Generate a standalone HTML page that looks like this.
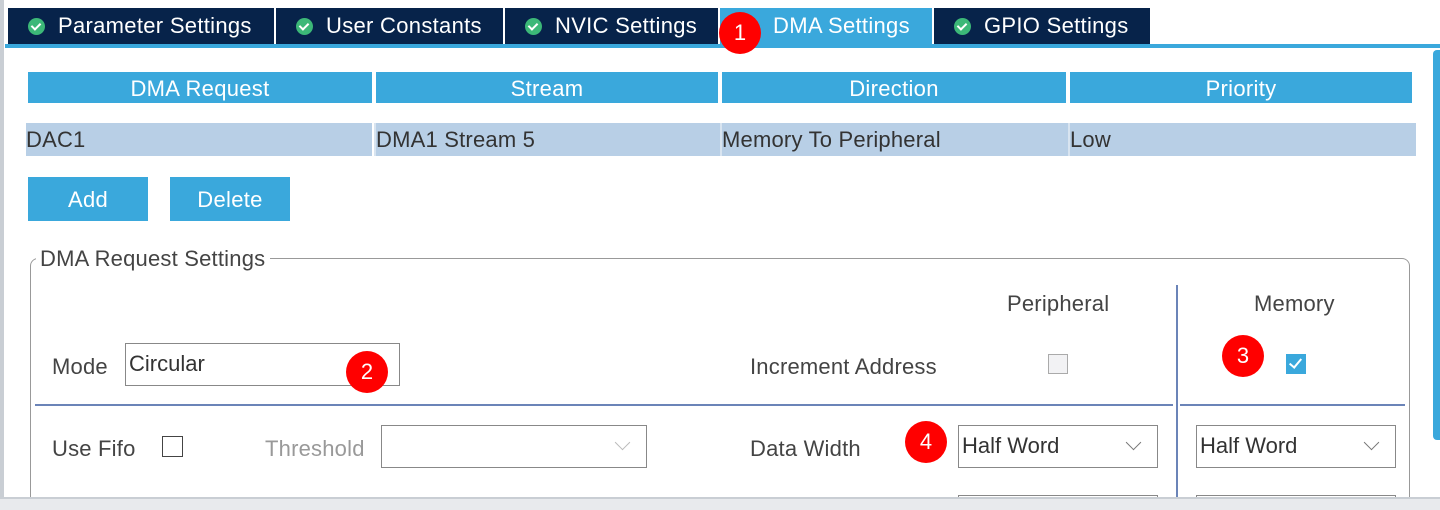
<!DOCTYPE html>
<html style="overflow:hidden;height:510px"><head><meta charset="utf-8"><style>
body{margin:0;width:1440px;height:510px;background:#fff;position:relative;overflow:hidden;font-family:"Liberation Sans",sans-serif;}
.a{position:absolute;}
.tab{position:absolute;top:8px;height:36px;background:#07234a;color:#fff;font-size:22px;letter-spacing:0.3px;line-height:36px;box-sizing:border-box;padding-left:20px;white-space:nowrap;}
.chk{display:inline-block;width:17px;height:17px;border-radius:50%;background:#3cb878;vertical-align:-2px;margin-right:13px;position:relative;}
.chk:after{content:"";position:absolute;left:5px;top:3px;width:4px;height:7px;border:solid #fff;border-width:0 2px 2px 0;transform:rotate(45deg);}
.hd{position:absolute;top:72px;height:31px;background:#3aa8dc;color:#fff;font-size:22px;letter-spacing:0.3px;line-height:33px;text-align:center;}
.rw{position:absolute;top:123px;height:33px;background:#b8cfe6;color:#333;font-size:22px;letter-spacing:0.2px;line-height:33px;}
.btn{position:absolute;top:177px;height:44px;width:120px;background:#3aa8dc;color:#fff;font-size:22px;letter-spacing:0.3px;line-height:46px;text-align:center;}
.lbl{position:absolute;font-size:22px;letter-spacing:0.2px;color:#444;white-space:nowrap;}
.sel{position:absolute;height:43px;border:1.5px solid #888;box-sizing:border-box;background:#fff;font-size:22px;line-height:40px;padding-left:3px;color:#333;}
.arr{position:absolute;right:18px;top:11px;width:10px;height:10px;border:solid #777;border-width:0 1.5px 1.5px 0;transform:rotate(45deg);}
.red{position:absolute;width:42px;height:42px;border-radius:50%;background:#f00;color:#fff;font-size:22px;line-height:42px;text-align:center;}
</style></head><body>
<div class="a" style="left:0;top:0;width:4px;height:510px;background:#c9ced4"></div>
<div class="a" style="left:5px;top:44px;width:1435px;height:4px;background:#3aa8dc"></div>
<div class="tab" style="left:8px;width:266px"><span class="chk"></span>Parameter Settings</div>
<div class="tab" style="left:276px;width:227px"><span class="chk"></span>User Constants</div>
<div class="tab" style="left:505px;width:213px"><span class="chk"></span>NVIC Settings</div>
<div class="tab" style="left:720px;width:212px;background:#3aa8dc;padding-left:53px">DMA Settings</div>
<div class="tab" style="left:934px;width:216px"><span class="chk"></span>GPIO Settings</div>
<div class="red" style="left:719px;top:12px;">1</div>
<div class="a" style="left:1433px;top:50px;width:7px;height:390px;background:#3aa8dc;border-radius:4px 0 0 4px"></div>
<div class="hd" style="left:28px;width:344px">DMA Request</div>
<div class="hd" style="left:376px;width:342px">Stream</div>
<div class="hd" style="left:722px;width:344px">Direction</div>
<div class="hd" style="left:1070px;width:342px">Priority</div>
<div class="rw" style="left:26px;width:346px">DAC1</div>
<div class="rw" style="left:374px;width:344px;border-left:2px solid #d8e4f0">DMA1 Stream 5</div>
<div class="rw" style="left:720px;width:346px;border-left:2px solid #d8e4f0">Memory To Peripheral</div>
<div class="rw" style="left:1068px;width:346px;border-left:2px solid #d8e4f0">Low</div>
<div class="btn" style="left:28px">Add</div>
<div class="btn" style="left:170px">Delete</div>
<div class="a" style="left:30px;top:258px;width:1380px;height:252px;border:1.5px solid #999;border-bottom:none;border-radius:8px 8px 0 0;box-sizing:border-box"></div>
<div class="lbl" style="left:36px;top:246px;background:#fff;padding:0 5px 0 4px;">DMA Request Settings</div>
<div class="a" style="left:1176px;top:285px;width:1.5px;height:212px;background:#6b84b8"></div>
<div class="a" style="left:35px;top:404px;width:1138px;height:1.5px;background:#6b84b8"></div>
<div class="a" style="left:1180px;top:404px;height:1.5px;background:#6b84b8;width:225px"></div>
<div class="lbl" style="left:1007px;top:291px">Peripheral</div>
<div class="lbl" style="left:1254px;top:291px">Memory</div>
<div class="lbl" style="left:52px;top:354px">Mode</div>
<div class="sel" style="left:125px;top:343px;width:275px">Circular</div>
<div class="red" style="left:346px;top:351px;">2</div>
<div class="lbl" style="left:750px;top:354px">Increment Address</div>
<div class="a" style="left:1048px;top:354px;width:20px;height:20px;border:1.5px solid #aaa;box-sizing:border-box;background:#f2f2f4"></div>
<div class="a" style="left:1286px;top:354px;width:20px;height:20px;background:#3aa8dc"><div class="a" style="left:6px;top:2px;width:5px;height:10px;border:solid #fff;border-width:0 2px 2px 0;transform:rotate(40deg)"></div></div>
<div class="red" style="left:1222px;top:335px;">3</div>
<div class="lbl" style="left:52px;top:436px">Use Fifo</div>
<div class="a" style="left:162px;top:436px;width:21px;height:21px;border:1.5px solid #444;box-sizing:border-box"></div>
<div class="lbl" style="left:265px;top:436px;color:#999">Threshold</div>
<div class="sel" style="left:381px;top:425px;width:266px"><div class="arr" style="border-color:#bbb"></div></div>
<div class="lbl" style="left:750px;top:436px">Data Width</div>
<div class="red" style="left:905px;top:421px;">4</div>
<div class="sel" style="left:958px;top:425px;width:200px">Half Word<div class="arr"></div></div>
<div class="sel" style="left:1196px;top:425px;width:200px">Half Word<div class="arr"></div></div>
<div class="a" style="left:958px;top:495px;width:200px;height:2px;border:1.5px solid #888;border-bottom:none;box-sizing:border-box"></div>
<div class="a" style="left:1196px;top:495px;width:200px;height:2px;border:1.5px solid #888;border-bottom:none;box-sizing:border-box"></div>
<div class="a" style="left:0;top:497px;width:1440px;height:13px;background:#e8eaed;border-top:2px solid #c9ced4;box-sizing:border-box"></div>
</body></html>
